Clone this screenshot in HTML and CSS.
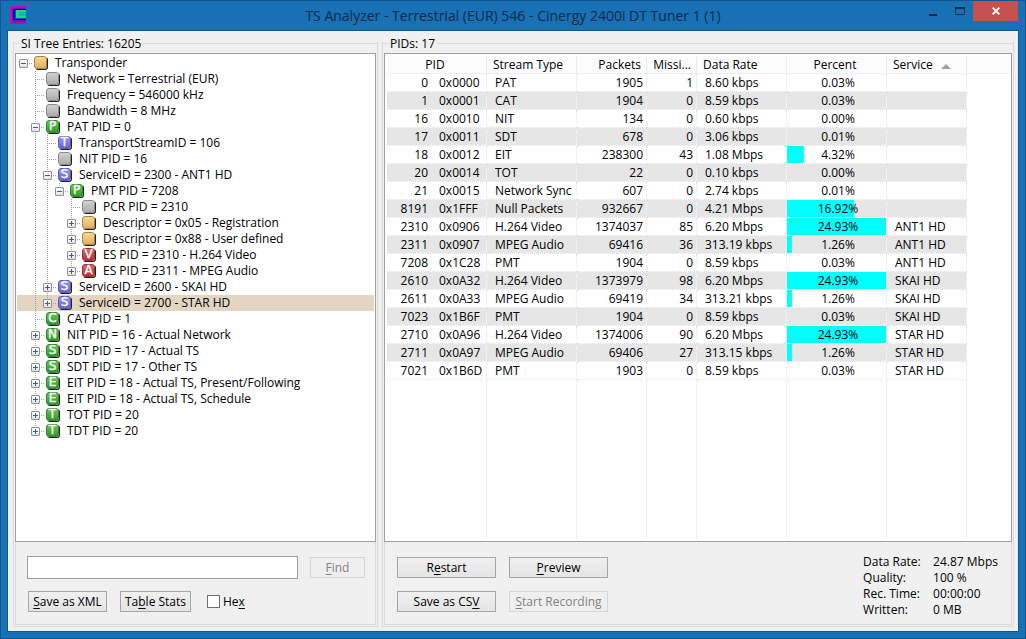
FILE: index.html
```html
<!DOCTYPE html>
<html lang="en">
<head>
<meta charset="utf-8">
<title>TS Analyzer</title>
<link rel="stylesheet" href="styles.css">
</head>
<body>
<div class="window">
  <header class="titlebar">
    <svg class="app-icon" width="16" height="18" viewBox="0 0 16 18" aria-hidden="true">
      <path fill="#a812b8" d="M0 0h16v18H0z"/><path fill="#d0109c" d="M0 1h2v16H0z"/>
      <path fill="#7010c8" d="M2 2h14v14H2z"/>
      <path fill="#1404a4" d="M3 3h13v11H3z"/><path fill="#1848d8" d="M5 4h11v9H5z"/>
      <path fill="#18e068" d="M6 4h10v8H6z"/><path fill="#14b4b4" d="M9 6h7v4H9z"/>
    </svg>
    <h1 class="title">TS Analyzer - Terrestrial (EUR) 546 - Cinergy 2400i DT Tuner 1 (1)</h1>
    <div class="controls">
      <button class="ctl" aria-label="Minimize"><svg width="10" height="12"><path d="M1 10h8" stroke="#0d2a45" stroke-width="2"/></svg></button>
      <button class="ctl" aria-label="Maximize"><svg width="10" height="8"><path d="M.5 1h9v6.500h-9z" fill="none" stroke="#0d2a45"/><path d="M0 1h10" stroke="#0d2a45" stroke-width="2"/></svg></button>
      <button class="ctl close" aria-label="Close"><svg width="8" height="8"><path d="M.7.7l6.600 6.600M7.300.7L.7 7.300" stroke="#fff" stroke-width="1.800"/></svg></button>
    </div>
  </header>
  <main class="client">
    <section class="group group-tree">
      <h2 class="legend">SI Tree Entries: 16205</h2>
      <div class="tree" role="tree">
        <div class="row" role="treeitem" aria-level="1"><span class="j root"><button class="ex" aria-label="Collapse"></button></span><span class="ic tan"></span>Transponder</div>
        <div class="row" role="treeitem" aria-level="2"><span class="g"></span><span class="j"></span><span class="ic"></span>Network = Terrestrial (EUR)</div>
        <div class="row" role="treeitem" aria-level="2"><span class="g"></span><span class="j"></span><span class="ic"></span>Frequency = 546000 kHz</div>
        <div class="row" role="treeitem" aria-level="2"><span class="g"></span><span class="j"></span><span class="ic"></span>Bandwidth = 8 MHz</div>
        <div class="row" role="treeitem" aria-level="2"><span class="g"></span><span class="j"><button class="ex" aria-label="Collapse"></button></span><span class="ic green">P</span>PAT PID = 0</div>
        <div class="row" role="treeitem" aria-level="3"><span class="g"></span><span class="g v"></span><span class="j"></span><span class="ic blue">T</span>TransportStreamID = 106</div>
        <div class="row" role="treeitem" aria-level="3"><span class="g"></span><span class="g v"></span><span class="j"></span><span class="ic"></span>NIT PID = 16</div>
        <div class="row" role="treeitem" aria-level="3"><span class="g"></span><span class="g v"></span><span class="j"><button class="ex" aria-label="Collapse"></button></span><span class="ic blue">S</span>ServiceID = 2300 - ANT1 HD</div>
        <div class="row" role="treeitem" aria-level="4"><span class="g"></span><span class="g v"></span><span class="g v"></span><span class="j last"><button class="ex" aria-label="Collapse"></button></span><span class="ic green">P</span>PMT PID = 7208</div>
        <div class="row" role="treeitem" aria-level="5"><span class="g"></span><span class="g v"></span><span class="g v"></span><span class="g"></span><span class="j"></span><span class="ic"></span>PCR PID = 2310</div>
        <div class="row" role="treeitem" aria-level="5"><span class="g"></span><span class="g v"></span><span class="g v"></span><span class="g"></span><span class="j"><button class="ex plus" aria-label="Expand"></button></span><span class="ic tan"></span>Descriptor = 0x05 - Registration</div>
        <div class="row" role="treeitem" aria-level="5"><span class="g"></span><span class="g v"></span><span class="g v"></span><span class="g"></span><span class="j"><button class="ex plus" aria-label="Expand"></button></span><span class="ic tan"></span>Descriptor = 0x88 - User defined</div>
        <div class="row" role="treeitem" aria-level="5"><span class="g"></span><span class="g v"></span><span class="g v"></span><span class="g"></span><span class="j"><button class="ex plus" aria-label="Expand"></button></span><span class="ic red">V</span>ES PID = 2310 - H.264 Video</div>
        <div class="row" role="treeitem" aria-level="5"><span class="g"></span><span class="g v"></span><span class="g v"></span><span class="g"></span><span class="j last"><button class="ex plus" aria-label="Expand"></button></span><span class="ic red">A</span>ES PID = 2311 - MPEG Audio</div>
        <div class="row" role="treeitem" aria-level="3"><span class="g"></span><span class="g v"></span><span class="j"><button class="ex plus" aria-label="Expand"></button></span><span class="ic blue">S</span>ServiceID = 2600 - SKAI HD</div>
        <div class="row selected" role="treeitem" aria-level="3" aria-selected="true"><span class="g"></span><span class="g v"></span><span class="j last"><button class="ex plus" aria-label="Expand"></button></span><span class="ic blue">S</span>ServiceID = 2700 - STAR HD</div>
        <div class="row" role="treeitem" aria-level="2"><span class="g"></span><span class="j"></span><span class="ic green">C</span>CAT PID = 1</div>
        <div class="row" role="treeitem" aria-level="2"><span class="g"></span><span class="j"><button class="ex plus" aria-label="Expand"></button></span><span class="ic green">N</span>NIT PID = 16 - Actual Network</div>
        <div class="row" role="treeitem" aria-level="2"><span class="g"></span><span class="j"><button class="ex plus" aria-label="Expand"></button></span><span class="ic green">S</span>SDT PID = 17 - Actual TS</div>
        <div class="row" role="treeitem" aria-level="2"><span class="g"></span><span class="j"><button class="ex plus" aria-label="Expand"></button></span><span class="ic green">S</span>SDT PID = 17 - Other TS</div>
        <div class="row" role="treeitem" aria-level="2"><span class="g"></span><span class="j"><button class="ex plus" aria-label="Expand"></button></span><span class="ic green">E</span>EIT PID = 18 - Actual TS, Present/Following</div>
        <div class="row" role="treeitem" aria-level="2"><span class="g"></span><span class="j"><button class="ex plus" aria-label="Expand"></button></span><span class="ic green">E</span>EIT PID = 18 - Actual TS, Schedule</div>
        <div class="row" role="treeitem" aria-level="2"><span class="g"></span><span class="j"><button class="ex plus" aria-label="Expand"></button></span><span class="ic green">T</span>TOT PID = 20</div>
        <div class="row" role="treeitem" aria-level="2"><span class="g"></span><span class="j last"><button class="ex plus" aria-label="Expand"></button></span><span class="ic green">T</span>TDT PID = 20</div>
      </div>
      <div class="panel panel-tree">
        <div class="line">
          <input class="search" type="text" aria-label="Find text">
          <button class="btn find" disabled><u>F</u>ind</button>
        </div>
        <div class="line line-actions">
          <button class="btn xml"><u>S</u>ave as XML</button>
          <button class="btn stats">Ta<u>b</u>le Stats</button>
          <label class="check"><input type="checkbox"><span>He<u>x</u></span></label>
        </div>
      </div>
    </section>
    <section class="group group-pids">
      <h2 class="legend">PIDs: 17</h2>
      <div class="list">
        <table class="pids">
          <colgroup><col class="c-pid"><col class="c-hex"><col class="c-type"><col class="c-packets"><col class="c-missing"><col class="c-rate"><col class="c-percent"><col class="c-service"><col></colgroup>
          <thead>
            <tr><th class="mid" colspan="2">PID</th><th>Stream Type</th><th class="num">Packets</th><th class="num">Missi...</th><th>Data Rate</th><th class="mid">Percent</th><th>Service<span class="sort"></span></th><th></th></tr>
          </thead>
          <tbody>
            <tr><td>0</td><td>0x0000</td><td>PAT</td><td>1905</td><td>1</td><td>8.60 kbps</td><td>0.03%</td><td></td><td></td></tr>
            <tr><td>1</td><td>0x0001</td><td>CAT</td><td>1904</td><td>0</td><td>8.59 kbps</td><td>0.03%</td><td></td><td></td></tr>
            <tr><td>16</td><td>0x0010</td><td>NIT</td><td>134</td><td>0</td><td>0.60 kbps</td><td>0.00%</td><td></td><td></td></tr>
            <tr><td>17</td><td>0x0011</td><td>SDT</td><td>678</td><td>0</td><td>3.06 kbps</td><td>0.01%</td><td></td><td></td></tr>
            <tr><td>18</td><td>0x0012</td><td>EIT</td><td>238300</td><td>43</td><td>1.08 Mbps</td><td style="--bar:17%">4.32%</td><td></td><td></td></tr>
            <tr><td>20</td><td>0x0014</td><td>TOT</td><td>22</td><td>0</td><td>0.10 kbps</td><td>0.00%</td><td></td><td></td></tr>
            <tr><td>21</td><td>0x0015</td><td>Network Sync</td><td>607</td><td>0</td><td>2.74 kbps</td><td>0.01%</td><td></td><td></td></tr>
            <tr><td>8191</td><td>0x1FFF</td><td>Null Packets</td><td>932667</td><td>0</td><td>4.21 Mbps</td><td style="--bar:68%">16.92%</td><td></td><td></td></tr>
            <tr><td>2310</td><td>0x0906</td><td>H.264 Video</td><td>1374037</td><td>85</td><td>6.20 Mbps</td><td style="--bar:100%">24.93%</td><td>ANT1 HD</td><td></td></tr>
            <tr><td>2311</td><td>0x0907</td><td>MPEG Audio</td><td>69416</td><td>36</td><td>313.19 kbps</td><td style="--bar:5%">1.26%</td><td>ANT1 HD</td><td></td></tr>
            <tr><td>7208</td><td>0x1C28</td><td>PMT</td><td>1904</td><td>0</td><td>8.59 kbps</td><td>0.03%</td><td>ANT1 HD</td><td></td></tr>
            <tr><td>2610</td><td>0x0A32</td><td>H.264 Video</td><td>1373979</td><td>98</td><td>6.20 Mbps</td><td style="--bar:100%">24.93%</td><td>SKAI HD</td><td></td></tr>
            <tr><td>2611</td><td>0x0A33</td><td>MPEG Audio</td><td>69419</td><td>34</td><td>313.21 kbps</td><td style="--bar:5%">1.26%</td><td>SKAI HD</td><td></td></tr>
            <tr><td>7023</td><td>0x1B6F</td><td>PMT</td><td>1904</td><td>0</td><td>8.59 kbps</td><td>0.03%</td><td>SKAI HD</td><td></td></tr>
            <tr><td>2710</td><td>0x0A96</td><td>H.264 Video</td><td>1374006</td><td>90</td><td>6.20 Mbps</td><td style="--bar:100%">24.93%</td><td>STAR HD</td><td></td></tr>
            <tr><td>2711</td><td>0x0A97</td><td>MPEG Audio</td><td>69406</td><td>27</td><td>313.15 kbps</td><td style="--bar:5%">1.26%</td><td>STAR HD</td><td></td></tr>
            <tr><td>7021</td><td>0x1B6D</td><td>PMT</td><td>1903</td><td>0</td><td>8.59 kbps</td><td>0.03%</td><td>STAR HD</td><td></td></tr>
            <tr class="rest"><td></td><td></td><td></td><td></td><td></td><td></td><td></td><td></td><td></td></tr>
          </tbody>
        </table>
      </div>
      <div class="panel panel-pids">
        <div class="actions">
          <button class="btn">R<u>e</u>start</button>
          <button class="btn"><u>P</u>review</button>
          <button class="btn">Save as CS<u>V</u></button>
          <button class="btn" disabled><u>S</u>tart Recording</button>
        </div>
        <dl class="status">
          <dt>Data Rate:</dt><dd>24.87 Mbps</dd>
          <dt>Quality:</dt><dd>100 %</dd>
          <dt>Rec. Time:</dt><dd>00:00:00</dd>
          <dt>Written:</dt><dd>0 MB</dd>
        </dl>
      </div>
    </section>
  </main>
</div>
</body>
</html>
```
FILE: styles.css
```css
* { box-sizing: border-box; }
body {
  margin: 0;
  font: 12px/16px "Open Sans", "Noto Sans", sans-serif;
  color: #000;
}
button, input { font: inherit; color: inherit; }
h1, h2 { margin: 0; font-weight: 400; }

.window {
  display: flex;
  flex-direction: column;
  min-height: 100vh;
  padding: 0 7px 7px;
  background: #1870b5;
  border: 1px solid #0f558f;
}
.titlebar {
  display: grid;
  grid-template-columns: 138px 1fr 138px;
  height: 30px;
}
.app-icon { margin: 5px 0 0 2px; }
.title {
  font-size: 14px;
  line-height: 30px;
  text-align: center;
  white-space: nowrap;
  color: #0d2a45;
}
.controls { display: flex; justify-content: flex-end; align-items: flex-start; }
.ctl {
  display: flex;
  align-items: center;
  justify-content: center;
  width: 27px;
  height: 20px;
  padding: 0;
  border: 0;
  background: none;
}
.close { width: 45px; background: #c75050; }

.client {
  flex: 1;
  display: grid;
  grid-template-columns: 365fr 632fr;
  gap: 4px;
  padding: 4px 4px 4px 5px;
  background: #f0f0f0;
  outline: 1px solid #0f558f;
}
.group {
  display: flex;
  flex-direction: column;
  min-width: 0;
  padding: 0 1px 1px;
  border: solid #dcdcdc;
  border-width: 0 1px 1px;
  border-image: linear-gradient(transparent 8px, #dcdcdc 8px) 1;
  background: linear-gradient(#dcdcdc, #dcdcdc) 0 8px / 100% 1px no-repeat;
}
.legend {
  align-self: flex-start;
  margin-left: 4px;
  padding: 0 2px;
  height: 18px;
  font-size: 12px;
  line-height: 18px;
  background: #f0f0f0;
}
.tree, .list {
  flex: 1;
  border: 1px solid #a0a0a0;
  background: #fff;
}
.tree { padding: 1px; }
.row { display: flex; height: 16px; white-space: nowrap; }
.selected { background: #e4d5c2; }

.g, .j {
  --dots: repeating-linear-gradient(#a0a0a0 0 1px, transparent 1px 2px);
  flex: none;
  width: 12px;
  background-repeat: no-repeat;
}
.v { background-image: var(--dots); background-size: 1px 100%; background-position: 6px 0; }
.j {
  width: 17px;
  padding: 4px 2px;
  background-image: var(--dots), repeating-linear-gradient(90deg, #a0a0a0 0 1px, transparent 1px 2px);
  background-size: 1px 100%, 10px 1px;
  background-position: 6px 0, 6px 8px;
}
.last { background-size: 1px 8px, 10px 1px; }
.root { background-size: 0 0, 10px 1px; }
.ex {
  display: block;
  width: 9px;
  height: 9px;
  padding: 0;
  border: 1px solid #919191;
  border-radius: 1px;
  background: linear-gradient(#3d5a9e, #3d5a9e) center / 5px 1px no-repeat, linear-gradient(#fff, #e4e4e4);
}
.plus {
  background: linear-gradient(#3d5a9e, #3d5a9e) center / 5px 1px no-repeat, linear-gradient(#3d5a9e, #3d5a9e) center / 1px 5px no-repeat, linear-gradient(#fff, #e4e4e4);
}
.ic {
  flex: none;
  width: 13px;
  height: 13px;
  margin: 1px 8px 0 0;
  border: 1px solid #8a8a8a;
  border-radius: 3px;
  background: linear-gradient(#d2d2d2, #acacac);
  box-shadow: 1px 1px 0 #222;
  color: #fff;
  font: 12px/11px "DejaVu Sans", sans-serif;
  -webkit-text-stroke: 0.3px #fff;
  display: flex;
  justify-content: center;
}
.tan { border-color: #a8854a; background: linear-gradient(#fad898, #e6ae55); }
.green { border-color: #2b8a2b; background: linear-gradient(#72c060, #2a9e20); }
.blue { border-color: #5a5ac0; background: linear-gradient(#9a9aec, #6262d4); }
.red { border-color: #a03030; background: linear-gradient(#d86a6a, #b83030); }

.panel {
  height: 83px;
  border: 1px solid #dcdcdc;
  border-top: 0;
}
.panel-tree { padding: 14px 10px 0 11px; }
.line { display: flex; align-items: center; }
.search {
  flex: 1;
  min-width: 0;
  height: 23px;
  padding: 0 4px;
  border: 1px solid #a0a0a0;
  background: #fff;
}
.btn {
  height: 21px;
  padding: 0;
  border: 1px solid #a6a6a6;
  background: linear-gradient(#f0f0f0, #e4e4e4);
  line-height: 19px;
  white-space: nowrap;
}
.btn:disabled { border-color: #d6d6d6; background: #efefef; color: #838383; }
u { text-underline-offset: 2px; }
.find { width: 55px; margin-left: 12px; }
.line-actions { gap: 13px; margin-top: 12px; padding-left: 1px; }
.xml { width: 79px; }
.stats { width: 71px; }
.check { display: flex; align-items: center; gap: 3px; margin-left: 3px; }
.check input {
  appearance: none;
  width: 13px;
  height: 13px;
  margin: 0;
  border: 1px solid #707070;
  background: #fff;
}

.list { display: flex; padding: 2px; }
.pids {
  width: 100%;
  table-layout: fixed;
  border-collapse: separate;
  border-spacing: 0;
}
.c-pid { width: 41px; }
.c-hex { width: 59px; }
.c-type { width: 90px; }
.c-packets { width: 70px; }
.c-missing { width: 50px; }
.c-rate { width: 90px; }
.c-percent { width: 100px; }
.c-service { width: 80px; }
.pids th {
  height: 17px;
  padding: 1px 5px 0 6px;
  border-right: 1px solid #e3edf7;
  border-bottom: 1px solid #e8eef5;
  background: #fcfcfc;
  font-weight: 400;
  line-height: 16px;
  text-align: left;
  white-space: nowrap;
}
.pids td {
  height: 18px;
  padding: 0 3px 0 8px;
  border-right: 1px dotted #e2e2e2;
  border-bottom: 1px dotted #e2e2e2;
  line-height: 17px;
  white-space: nowrap;
}
.pids .mid { padding: 1px 3px 0 0; text-align: center; }
.pids td:nth-child(7) { padding: 0 0 0 3px; text-align: center; }
.pids .num, .pids td:nth-child(4), .pids td:nth-child(5) { text-align: right; }
.pids td:nth-child(1) { padding: 0; border-right: 0; text-align: right; }
.pids td:nth-child(2) { padding-left: 11px; }
.pids td:nth-child(7) {
  background-image: linear-gradient(#0ff, #0ff);
  background-repeat: no-repeat;
  background-size: var(--bar, 0) 100%;
  background-clip: padding-box;
}
.pids td:last-child, .pids th:last-child { border-right: 0; }
.pids td:last-child { border-bottom: 0; }
.pids tr:nth-child(even):not(.rest) td:not(:last-child) { background-color: #e6e6e6; background-clip: padding-box; }
.pids .rest td { height: auto; border-bottom: 0; }
.sort {
  display: inline-block;
  margin-left: 8px;
  border: 5px solid transparent;
  border-top: 0;
  border-bottom: 5px solid #a0a0a0;
}

.panel-pids {
  display: flex;
  justify-content: space-between;
  padding: 12px 13px 0 12px;
}
.actions { display: grid; grid-template-columns: 99px 99px; gap: 13px; align-content: start; padding-top: 3px; }
.status {
  display: grid;
  grid-template-columns: 70px auto;
  align-content: start;
  margin: 0;
  white-space: nowrap;
}
.status dd { margin: 0; }
```
